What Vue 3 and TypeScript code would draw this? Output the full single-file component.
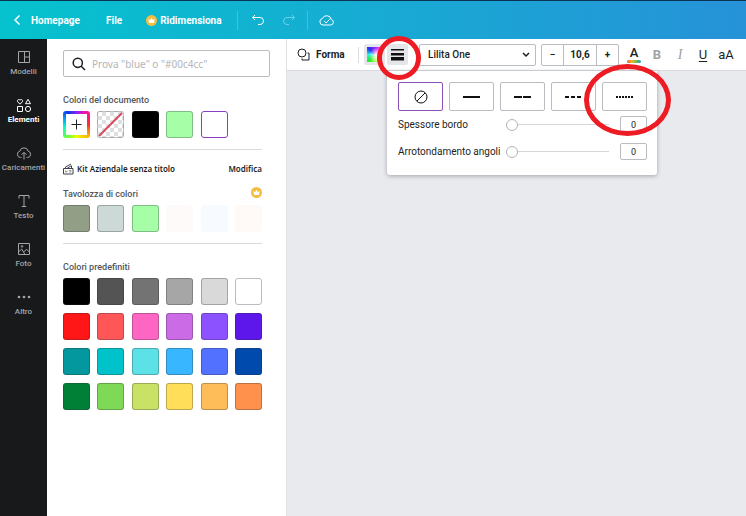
<script setup lang="ts">
import { ref } from 'vue'

interface Swatch {
  color: string
  faded?: boolean
}

const nav = ['Modelli', 'Elementi', 'Caricamenti', 'Testo', 'Foto', 'Altro']
const active = ref('Elementi')
const query = ref('')
const font = ref('Lilita One')
const size = ref('10,6')
const border = ref(0)
const radius = ref(0)
const strokeStyle = ref(0)

const kitColors: Swatch[] = [
  { color: '#929e86' },
  { color: '#cdd9d6' },
  { color: '#a6ffa6' },
  { color: '#fffafa', faded: true },
  { color: '#f7fbff', faded: true },
  { color: '#fff9f8', faded: true },
]

const defaults: string[] = [
  '#000000', '#545454', '#737373', '#a6a6a6', '#d9d9d9', '#ffffff',
  '#ff1616', '#ff5757', '#ff66c4', '#cb6ce6', '#8c52ff', '#5e17eb',
  '#03989e', '#00c2cb', '#5ce1e6', '#38b6ff', '#5271ff', '#004aad',
  '#008037', '#7ed957', '#c9e265', '#ffde59', '#ffbd59', '#ff914d',
]

const strokes = [
  { name: 'Nessun bordo', dash: '' },
  { name: 'Linea continua', dash: '16 0' },
  { name: 'Tratti lunghi', dash: '8 1' },
  { name: 'Tratti corti', dash: '4 2' },
  { name: 'Punti', dash: '2 1' },
]
</script>

<template>
  <div class="app">
    <header class="topbar">
      <a class="home" href="#">
        <svg width="8" height="12" viewBox="0 0 8 12"><path d="M6.500 1.500 2 6l4.500 4.500" /></svg>
        Homepage
      </a>
      <button class="file" type="button">File</button>
      <button class="resize" type="button">
        <svg class="crown" width="11" height="11" viewBox="0 0 11 11">
          <circle cx="5.500" cy="5.500" r="5.500" /><path d="M2.300 3.800 4 5.300l1.500-2.500L7 5.300l1.700-1.500-.7 4.200H3z" />
        </svg>
        Ridimensiona
      </button>
      <span class="bar-rule first"></span>
      <button class="bar-icon undo" type="button" aria-label="Annulla">
        <svg width="14" height="12" viewBox="0 0 14 12"><path d="M4 1 1.500 3.500 4 6M1.500 3.500H9a3.500 3.500 0 0 1 0 7H7" /></svg>
      </button>
      <button class="bar-icon redo" type="button" aria-label="Ripeti" disabled>
        <svg width="14" height="12" viewBox="0 0 14 12"><path d="M10 1l2.500 2.500L10 6M12.500 3.500H5a3.500 3.500 0 0 0 0 7h2" /></svg>
      </button>
      <span class="bar-rule second"></span>
      <button class="bar-icon" type="button" aria-label="Salvato">
        <svg width="15" height="12" viewBox="0 0 15 12"><path d="M4 11h7.500a2.800 2.800 0 0 0 .8-5.500A4.700 4.700 0 0 0 3.400 4.500 3.300 3.300 0 0 0 4 11zM5.200 7l1.900 1.900 5-5" /></svg>
      </button>
    </header>

    <div class="body">
      <nav class="side">
        <button v-for="item in nav" :key="item" type="button" class="side-item" :class="{ on: item === active }" @click="active = item">
          <svg width="16" height="16" viewBox="0 0 16 16">
            <path v-if="item === 'Modelli'" d="M2.500 2.500h11v11h-11zM8.500 2.500v11M8.500 8h5" />
            <path v-else-if="item === 'Elementi'" d="M4 7.200 1.700 4.800C.6 3.300 2.800 1.400 4 3.300 5.200 1.400 7.400 3.300 6.300 4.800zM12 2.300l2.500 4.400h-5zM1.500 9.500h5v5h-5zM12 9.400a2.600 2.600 0 1 1 0 5.200 2.600 2.600 0 0 1 0-5.200z" />
            <path v-else-if="item === 'Caricamenti'" d="M5.500 12.500H4.600a3.200 3.200 0 0 1-.8-6.300 4.300 4.300 0 0 1 8.400 0 3.200 3.200 0 0 1-.8 6.300h-.9M8 14.500V7.500M5.500 9.800 8 7.300l2.500 2.500" />
            <path v-else-if="item === 'Testo'" d="M3 5.500v-3h10v3M8 2.500v11M5.800 13.500h4.400" />
            <path v-else-if="item === 'Foto'" d="M2.500 2.500h11v11h-11zM2.500 11l3.200-3 3 5M7.700 11 10.500 8.200l3 3M6 4.600a.8.8 0 1 1 0 1.600.8.8 0 0 1 0-1.600z" />
            <g v-else class="dots"><circle cx="3" cy="8" r="1.300" /><circle cx="8" cy="8" r="1.300" /><circle cx="13" cy="8" r="1.300" /></g>
          </svg>
          <span>{{ item }}</span>
        </button>
      </nav>

      <aside class="panel">
        <label class="search">
          <svg width="14" height="14" viewBox="0 0 14 14"><circle cx="5.800" cy="5.800" r="4.600" /><path d="m9.200 9.200 3.800 3.800" /></svg>
          <input v-model="query" type="text" aria-label="Cerca un colore" placeholder="Prova &quot;blue&quot; o &quot;#00c4cc&quot;" />
        </label>

        <div class="content">
          <h2 class="label">Colori del documento</h2>
          <div class="grid">
            <button class="swatch add" type="button" aria-label="Aggiungi un colore">
              <svg width="21" height="21" viewBox="0 0 21 21"><path d="M10.500 5.500v10M5.500 10.500h10" /></svg>
            </button>
            <button class="swatch none" type="button" aria-label="Trasparente">
              <svg viewBox="0 0 25 25"><path d="M1 24 24 1" /></svg>
            </button>
            <button class="swatch" type="button" aria-label="Nero" :style="{ background: '#000000' }"></button>
            <button class="swatch" type="button" aria-label="Verde" :style="{ background: '#a6ffa6' }"></button>
            <button class="swatch chosen" type="button" aria-label="Bianco"></button>
          </div>
          <hr />
          <div class="kit">
            <svg width="11" height="12" viewBox="0 0 11 12"><path d="M.5 5.500h9.500v5.500H.5zM2.500 5.500V4L8 1M4 5.500l4.500-3M8.500 5.500V3" /><path class="fine" d="M2.500 7.500v1.500h1.500V7.500M6 7.500h2v1.500H6" /></svg>
            <strong>Kit Aziendale senza titolo</strong>
            <a href="#">Modifica</a>
          </div>
          <div class="palette-head">
            <h2 class="label">Tavolozza di colori</h2>
            <svg class="crown" width="11" height="11" viewBox="0 0 11 11">
              <circle cx="5.500" cy="5.500" r="5.500" /><path d="M2.300 3.800 4 5.300l1.500-2.500L7 5.300l1.700-1.500-.7 4.200H3z" />
            </svg>
          </div>
          <div class="grid">
            <button v-for="s in kitColors" :key="s.color" type="button" class="swatch" :class="{ faded: s.faded }" :aria-label="s.color" :style="{ background: s.color }"></button>
          </div>
          <hr />
          <h2 class="label">Colori predefiniti</h2>
          <div class="grid">
            <button v-for="c in defaults" :key="c" type="button" class="swatch" :class="{ light: c === '#ffffff' }" :aria-label="c" :style="{ background: c }"></button>
          </div>
        </div>
      </aside>

      <main class="workspace">
        <div class="toolbar">
          <button class="shape" type="button">
            <svg width="13" height="13" viewBox="0 0 13 13"><circle cx="5" cy="5" r="4" /><path d="M10.500 5H12v7H5v-1.500" /></svg>
            Forma
          </button>
          <span class="rule"></span>
          <button class="tool color" type="button" aria-label="Colore"><span></span></button>
          <button class="tool lines" type="button" aria-label="Stile bordo">
            <svg width="13" height="12" viewBox="0 0 13 12"><path d="M0 0h13v1.500H0zM0 4h13v2.500H0zM0 8h13v3.500H0z" /></svg>
          </button>
          <div class="font">
            <select v-model="font" aria-label="Carattere"><option>Lilita One</option></select>
            <svg width="8" height="6" viewBox="0 0 8 6"><path d="m1 1 3 3 3-3" /></svg>
          </div>
          <div class="stepper">
            <button type="button" aria-label="Riduci">−</button>
            <input v-model="size" type="text" aria-label="Dimensione carattere" />
            <button type="button" aria-label="Aumenta">+</button>
          </div>
          <div class="formats">
            <button class="ink" type="button" aria-label="Colore testo">A<span></span></button>
            <button class="bold" type="button">B</button>
            <button class="italic" type="button">I</button>
            <button class="under" type="button">U</button>
            <button class="case" type="button">aA</button>
          </div>
        </div>

        <section class="popover">
          <div class="options">
            <button v-for="(s, i) in strokes" :key="s.name" type="button" :aria-label="s.name" :class="{ on: i === strokeStyle }" @click="strokeStyle = i">
              <svg v-if="i === 0" class="ban" width="14" height="14" viewBox="0 0 14 14"><circle cx="7" cy="7" r="6" /><path d="m3 11 8-8" /></svg>
              <svg v-else width="17" height="2" viewBox="0 0 17 2"><path d="M0 1h17" :stroke-dasharray="s.dash" /></svg>
            </button>
          </div>
          <div class="setting">
            <label for="border">Spessore bordo</label>
            <input id="border" v-model="border" type="range" min="0" max="100" />
            <input v-model="border" type="text" aria-label="Valore spessore bordo" />
          </div>
          <div class="setting">
            <label for="radius">Arrotondamento angoli</label>
            <input id="radius" v-model="radius" type="range" min="0" max="100" />
            <input v-model="radius" type="text" aria-label="Valore arrotondamento angoli" />
          </div>
        </section>

        <span class="mark mark-tool"></span>
        <span class="mark mark-option"></span>
      </main>
    </div>
  </div>
</template>

<style>
body {
  margin: 0;
}
</style>

<style scoped>
.app {
  display: flex;
  flex-direction: column;
  min-height: 100vh;
  font-family: Roboto, "Noto Sans", sans-serif;
  font-size: 10px;
  color: #1b1f24;
}
.app *, .app *::before {
  box-sizing: border-box;
}
button, input, select {
  margin: 0;
  padding: 0;
  border: 0;
  background: none;
  font: inherit;
  color: inherit;
}
svg {
  display: block;
  flex: none;
  fill: none;
  stroke: currentColor;
}
a {
  color: inherit;
  text-decoration: none;
}

.topbar {
  display: flex;
  align-items: center;
  height: 39px;
  padding-left: 13px;
  border-top: 1px solid #0b3354;
  background: linear-gradient(90deg, #05c2cd, #17abd3 50%, #2692d8);
  color: #fff;
  font-size: 10px;
  font-weight: 700;
}
.home, .resize {
  display: flex;
  align-items: center;
}
.home {
  gap: 10px;
  width: 67px;
}
.home svg {
  stroke-width: 1.500;
}
.file {
  margin-left: 26px;
}
.resize {
  gap: 3px;
  width: 76px;
  margin-left: 24px;
}
.crown {
  stroke: none;
}
.crown circle {
  fill: #f2be3f;
}
.crown path {
  fill: #fff;
}
.bar-rule {
  width: 1px;
  height: 19px;
  background: rgba(255, 255, 255, 0.2);
}
.bar-rule.first {
  margin: 0 13px 0 15px;
}
.bar-rule.second {
  margin: 0 11px;
}
.redo {
  margin-left: 17px;
  opacity: 0.4;
}

.body {
  display: flex;
  flex: 1;
}
.side {
  flex: none;
  width: 47px;
  padding-top: 10px;
  background: #18191b;
}
.side-item {
  display: flex;
  flex-direction: column;
  align-items: center;
  width: 100%;
  height: 48px;
  color: #a3a5a8;
  font-size: 8px;
  font-weight: 500;
  line-height: 14px;
}
.side-item.on {
  color: #fff;
  font-weight: 700;
}
.dots {
  fill: currentColor;
  stroke: none;
}

.panel {
  flex: none;
  width: 240px;
  padding: 11px 16px 16px;
  border-right: 1px solid #dfe0e3;
  background: #fff;
}
.search {
  display: flex;
  align-items: center;
  gap: 6px;
  height: 27px;
  padding-left: 8px;
  border: 1px solid #b9bcc0;
  border-radius: 2px;
}
.search svg {
  stroke-width: 1.500;
}
.search input {
  flex: 1;
  min-width: 0;
  outline: 0;
  font-family: "Noto Sans", sans-serif;
}
.search input::placeholder {
  color: #b3b5b9;
}
.content {
  margin-right: 8px;
}
.label {
  margin: 16px 0 4px;
  color: #51565d;
  font-size: 9px;
  font-weight: 500;
  line-height: 14px;
}
.grid {
  display: grid;
  grid-template-columns: repeat(6, 27px);
  justify-content: space-between;
  row-gap: 8px;
}
.swatch {
  height: 27px;
  border: 1px solid rgba(40, 44, 50, 0.3);
  border-radius: 3px;
}
.swatch.light {
  border-color: #b9bcc0;
}
.swatch.faded {
  border-color: transparent;
}
.swatch.chosen {
  border-color: #8b3fc0;
  background: #fff;
}
.swatch.add {
  padding: 3px;
  border: 0;
  background: conic-gradient(from 0deg, #8a20ff, #ff1493 12%, #ff2a2a 25%, #ffb000 37%, #eaff00 50%, #6cff3a 60%, #00ffc8 72%, #00a2ff 82%, #1236e8 90%, #8a20ff);
}
.swatch.add svg {
  background: #fff;
}
.swatch.none {
  background: repeating-conic-gradient(#dedfe1 0 25%, #fff 0 50%) 0 0 / 8px 8px;
}
.swatch.none path {
  stroke: #d94a5c;
  stroke-width: 2;
}
hr {
  height: 1px;
  margin: 11px 0 0;
  border: 0;
  background: #dadbde;
}
.kit {
  display: flex;
  align-items: center;
  gap: 3px;
  margin-top: 12px;
  font-size: 8px;
  line-height: 14px;
}
.kit svg {
  stroke: #3f4349;
}
.kit .fine {
  opacity: 0.5;
}
.kit strong, .kit a {
  font-family: "Noto Sans", sans-serif;
  font-weight: 600;
}
.kit a {
  margin-left: auto;
}
.palette-head {
  display: flex;
  align-items: flex-start;
  justify-content: space-between;
  margin-top: 11px;
}
.palette-head .label {
  margin-top: 0;
}

.workspace {
  position: relative;
  flex: 1;
  min-width: 0;
  background: #e9eaee;
}
.toolbar {
  display: flex;
  align-items: center;
  height: 32px;
  padding-left: 10px;
  border-bottom: 1px solid #d8dadd;
  background: #fff;
}
.shape {
  display: flex;
  align-items: center;
  gap: 6px;
  width: 61px;
  font-weight: 700;
}
.rule {
  width: 1px;
  height: 16px;
  background: #dcdde0;
}
.tool {
  display: grid;
  place-items: center;
  width: 21px;
  height: 21px;
  border-radius: 2px;
  background: #e4e6e9;
}
.color {
  margin: 0 2px 0 5px;
}
.color span {
  width: 15px;
  height: 15px;
  background:
    radial-gradient(circle at 60% 55%, #fff, transparent 60%),
    conic-gradient(#8b28ff, #ff3bf0 12%, #ff4a5a 25%, #f6ff3a 38%, #8dff3a 50%, #22e832 62%, #20f4ec 75%, #2430f0 88%, #8b28ff);
}
.lines path {
  fill: #111;
  stroke: none;
}
.font {
  display: grid;
  align-items: center;
  width: 117px;
  margin: 0 5px 0 11px;
}
.font select, .font svg {
  grid-area: 1 / 1;
}
.font select {
  height: 22px;
  padding-left: 8px;
  border: 1px solid #b9bcc0;
  border-radius: 2px;
  appearance: none;
  font-weight: 500;
}
.font svg {
  justify-self: end;
  margin-right: 6px;
  stroke-width: 1.500;
  pointer-events: none;
}
.stepper {
  display: flex;
  height: 22px;
  border: 1px solid #b9bcc0;
  border-radius: 2px;
  font-weight: 700;
}
.stepper button {
  width: 21px;
}
.stepper input {
  width: 34px;
  border: solid #b9bcc0;
  border-width: 0 1px;
  text-align: center;
}
.formats {
  display: flex;
  gap: 7px;
  margin-left: 7px;
  font-size: 13px;
}
.formats button {
  width: 16px;
  line-height: 18px;
}
.formats .ink {
  font-weight: 500;
  line-height: 14px;
}
.ink span {
  display: block;
  height: 3px;
  margin: 0 1px;
  border-radius: 2px;
  background: linear-gradient(90deg, #e75a42, #f4b52d, #72bd4e, #2495dd);
}
.bold, .italic {
  color: #a0a2a6;
}
.bold {
  font-weight: 700;
}
.italic {
  font-family: "Liberation Serif", serif;
  font-size: 14px;
  font-style: italic;
}
.under {
  text-decoration: underline;
  text-underline-offset: 2px;
}

.popover {
  position: absolute;
  top: 32px;
  left: 100px;
  width: 270px;
  padding: 11px 10px 15px 11px;
  border-radius: 0 0 3px 3px;
  background: #fff;
  box-shadow: 0 1px 4px rgba(30, 35, 45, 0.35);
}
.options {
  display: grid;
  grid-template-columns: repeat(5, 1fr);
  gap: 6px;
  margin-bottom: 5px;
}
.options button {
  display: grid;
  place-items: center;
  height: 29px;
  border: 1px solid #b9bcc0;
  border-radius: 2px;
}
.options .on {
  border-color: #8b4fb5;
}
.options svg {
  stroke: #111;
  stroke-width: 2;
}
.options .ban {
  stroke-width: 1;
}
.setting {
  display: grid;
  grid-template-columns: 108px 1fr 27px;
  align-items: center;
  height: 17px;
}
.setting + .setting {
  margin-top: 10px;
}
.setting label {
  white-space: nowrap;
}
.setting input[type="text"] {
  height: 17px;
  border: 1px solid #b9bcc0;
  border-radius: 2px;
  font-size: 9px;
  text-align: center;
}
.setting input[type="range"] {
  width: 103px;
  height: 12px;
  appearance: none;
}
.setting input[type="range"]::-webkit-slider-runnable-track {
  height: 12px;
  background: linear-gradient(#d5d6d9, #d5d6d9) center / 100% 1px no-repeat;
}
.setting input[type="range"]::-webkit-slider-thumb {
  width: 12px;
  height: 12px;
  border: 1px solid #b2b4b8;
  border-radius: 50%;
  background: #fff;
  appearance: none;
}

.mark {
  position: absolute;
  border: 5px solid #ed1c24;
  border-radius: 50%;
  pointer-events: none;
}
.mark-tool {
  top: -3px;
  left: 90px;
  width: 44px;
  height: 44px;
}
.mark-option {
  top: 25px;
  left: 297px;
  width: 87px;
  height: 72px;
}
</style>
